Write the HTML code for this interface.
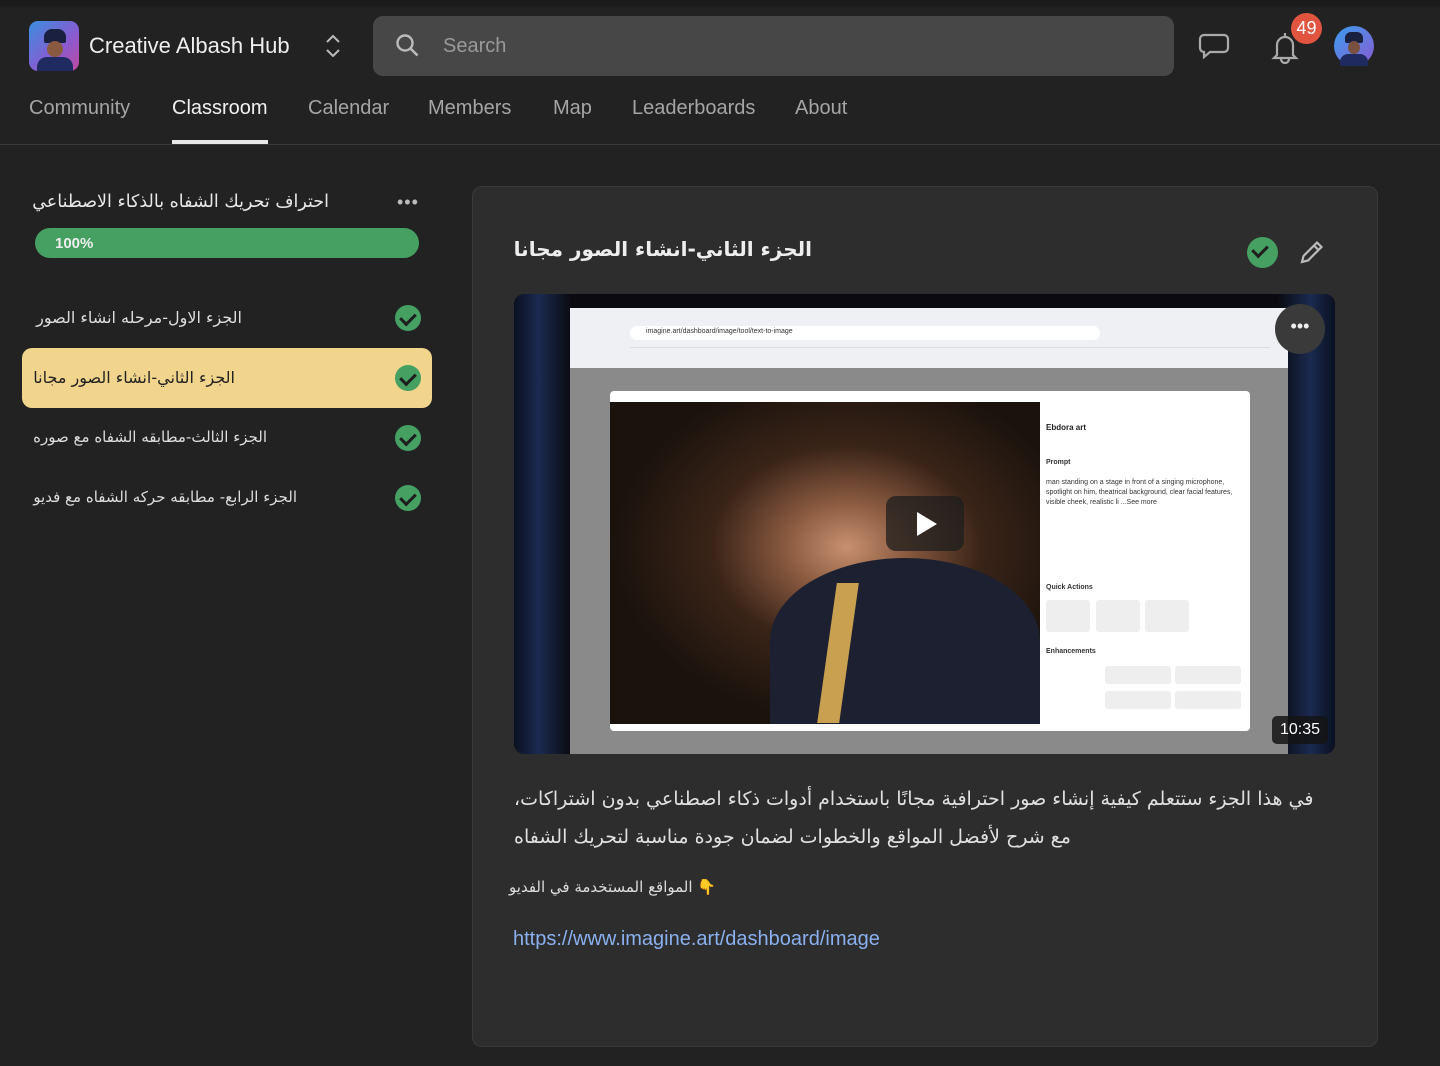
<!DOCTYPE html>
<html><head><meta charset="utf-8"><style>
*{box-sizing:border-box;margin:0;padding:0}
body{width:1440px;height:1066px;background:#222222;font-family:"Liberation Sans","Noto Sans CJK SC",sans-serif;color:#ddd;position:relative;overflow:hidden}
.abs{position:absolute}
.ar{font-family:"DejaVu Sans","Noto Sans CJK SC",sans-serif;direction:rtl;white-space:nowrap}
.check{position:absolute;width:26px;height:26px;border-radius:50%;background:#45a062}
.check:after{content:"";position:absolute;left:8px;top:5px;width:7px;height:12px;border:solid #1e1e1e;border-width:0 3px 3px 0;transform:rotate(45deg)}
.nav{position:absolute;top:97px;font-size:20px;color:#a5a5a5}
</style></head><body>
<div class="abs" style="left:0;top:0;width:1440px;height:6px;background:#1a1a1a"></div>
<div class="abs" style="left:29px;top:21px;width:50px;height:50px;border-radius:9px;background:linear-gradient(135deg,#3a8ee0,#8a5ad0 60%,#c04aa0)"><div class="abs" style="left:15px;top:8px;width:22px;height:14px;background:#1a2040;border-radius:8px 8px 2px 2px"></div><div class="abs" style="left:18px;top:20px;width:16px;height:16px;background:#8a5a40;border-radius:50%"></div><div class="abs" style="left:8px;top:36px;width:36px;height:14px;background:#1e2a60;border-radius:10px 10px 0 0"></div></div>
<div class="abs" style="left:89px;top:33px;font-size:22px;color:#eee">Creative Albash Hub</div>
<svg class="abs" style="left:322px;top:32px" width="22" height="28" viewBox="0 0 22 28"><path d="M5 10l6-6 6 6M5 18l6 6 6-6" stroke="#bbb" stroke-width="2" fill="none"/></svg>
<div class="abs" style="left:373px;top:16px;width:801px;height:60px;background:#474747;border-radius:10px"></div>
<svg class="abs" style="left:395px;top:33px" width="26" height="26" viewBox="0 0 26 26"><circle cx="10" cy="10" r="7.5" stroke="#bbb" stroke-width="2.4" fill="none"/><path d="M15.5 15.5l7 7" stroke="#bbb" stroke-width="2.6"/></svg>
<div class="abs" style="left:443px;top:35px;font-size:20px;color:#9a9a9a">Search</div>
<svg class="abs" style="left:1198px;top:32px" width="32" height="28" viewBox="0 0 32 28"><path d="M6 3h20a4 4 0 0 1 4 4v9a4 4 0 0 1-4 4H12l-6 5v-5a4 4 0 0 1-4-4V7a4 4 0 0 1 4-4z" stroke="#aaa" stroke-width="2.2" fill="none"/></svg>
<svg class="abs" style="left:1270px;top:30px" width="30" height="34" viewBox="0 0 30 34"><path d="M15 3v3M7 25V15a8 8 0 0 1 16 0v10l3 3H4z M11 29a4 4 0 0 0 8 0" stroke="#aaa" stroke-width="2.2" fill="none"/></svg>
<div class="abs" style="left:1291px;top:13px;width:31px;height:31px;border-radius:50%;background:#e05440;color:#fff;font-size:18px;text-align:center;line-height:31px">49</div>
<div class="abs" style="left:1334px;top:26px;width:40px;height:40px;border-radius:50%;background:linear-gradient(135deg,#3a9ef0,#8a5ad0)"><div class="abs" style="left:11px;top:6px;width:18px;height:11px;background:#1a2040;border-radius:6px 6px 2px 2px"></div><div class="abs" style="left:14px;top:15px;width:12px;height:13px;background:#7a5040;border-radius:50%"></div><div class="abs" style="left:6px;top:28px;width:28px;height:12px;background:#1e2a60;border-radius:8px 8px 0 0"></div></div>
<div class="nav" style="left:29px">Community</div>
<div class="nav" style="left:172px;color:#f0f0f0">Classroom</div>
<div class="abs" style="left:172px;top:140px;width:96px;height:4px;background:#e8e8e8"></div>
<div class="nav" style="left:308px">Calendar</div>
<div class="nav" style="left:428px">Members</div>
<div class="nav" style="left:553px">Map</div>
<div class="nav" style="left:632px">Leaderboards</div>
<div class="nav" style="left:795px">About</div>
<div class="abs" style="left:0;top:144px;width:1440px;height:1px;background:#3a3a3a"></div>

<div class="abs ar" style="right:1111px;top:192px;font-size:17.5px;color:#e8e8e8">احتراف تحريك الشفاه بالذكاء الاصطناعي</div>
<div class="abs" style="left:397px;top:192px;font-size:18px;color:#bbb;letter-spacing:1px">•••</div>
<div class="abs" style="left:35px;top:228px;width:384px;height:30px;border-radius:15px;background:#45a062"></div>
<div class="abs" style="left:55px;top:235px;font-size:15px;font-weight:bold;color:#eee">100%</div>
<div class="abs ar" style="right:1198px;top:308px;font-size:16px;color:#ddd">الجزء الاول-مرحله انشاء الصور</div>
<div class="check" style="left:395px;top:305px"></div>
<div class="abs" style="left:22px;top:348px;width:410px;height:60px;border-radius:10px;background:#f2d58c"></div>
<div class="abs ar" style="right:1205px;top:368px;font-size:16px;color:#222">الجزء الثاني-انشاء الصور مجانا</div>
<div class="check" style="left:395px;top:365px"></div>
<div class="abs ar" style="right:1173px;top:428px;font-size:15px;color:#ddd">الجزء الثالث-مطابقه الشفاه مع صوره</div>
<div class="check" style="left:395px;top:425px"></div>
<div class="abs ar" style="right:1143px;top:488px;font-size:15px;color:#ddd">الجزء الرابع- مطابقه حركه الشفاه مع فديو</div>
<div class="check" style="left:395px;top:485px"></div>

<div class="abs" style="left:472px;top:186px;width:906px;height:861px;background:#2d2d2d;border:1px solid #3a3a3a;border-radius:10px"></div>
<div class="abs ar" style="right:628px;top:237px;font-size:20px;font-weight:bold;color:#eee">الجزء الثاني-انشاء الصور مجانا</div>
<div class="check" style="left:1247px;top:237px;width:31px;height:31px"></div>
<svg class="abs" style="left:1298px;top:238px" width="28" height="28" viewBox="0 0 28 28"><path d="M4 24l1.5-6L19 4.5l4.5 4.5L10 22.5z M16 7.5l4.5 4.5" stroke="#bbb" stroke-width="2.2" fill="none"/></svg>

<div class="abs" style="left:514px;top:294px;width:821px;height:460px;border-radius:10px;background:linear-gradient(90deg,#0a1020,#1a2a50 3%,#0a0a10 7%,#0a0a10 93%,#1a2a50 97%,#0a1020);overflow:hidden">
 <div class="abs" style="left:56px;top:14px;width:718px;height:446px;background:#8a8a8a">
  <div class="abs" style="left:0;top:0;width:718px;height:60px;background:#eef0f3"></div>
  <div class="abs" style="left:60px;top:39px;width:640px;height:1px;background:#ddd"></div>
  <div class="abs" style="left:60px;top:18px;width:470px;height:14px;background:#fff;border-radius:7px"></div>
  <div class="abs" style="left:76px;top:20px;font-size:7px;color:#333">imagine.art/dashboard/image/tool/text-to-image</div>
  <div class="abs" style="left:40px;top:83px;width:640px;height:340px;background:#fff;border-radius:4px"></div>
  <div class="abs" style="left:40px;top:94px;width:430px;height:322px;background:radial-gradient(ellipse at 55% 45%,#c89070 0,#8a5a40 18%,#3a2418 40%,#1a120c 70%)"></div>
  <div class="abs" style="left:200px;top:250px;width:270px;height:166px;background:#1c2030;border-radius:50% 50% 0 0"></div>
  <div class="abs" style="left:257px;top:275px;width:22px;height:140px;background:#c8a050;transform:skewX(-8deg)"></div>
  <div class="abs" style="left:476px;top:115px;font-size:8px;color:#222;font-weight:bold">Ebdora art</div>
  <div class="abs" style="left:476px;top:150px;font-size:7px;color:#333;width:200px;line-height:10px"><b>Prompt</b><br><br>man standing on a stage in front of a singing microphone, spotlight on him, theatrical background, clear facial features, visible cheek, realistic li ...See more</div>
  <div class="abs" style="left:476px;top:276px;font-size:7px;color:#333;font-weight:bold">Quick Actions</div>
  <div class="abs" style="left:476px;top:292px;width:44px;height:32px;background:#eee;border-radius:3px"></div>
  <div class="abs" style="left:526px;top:292px;width:44px;height:32px;background:#eee;border-radius:3px"></div>
  <div class="abs" style="left:575px;top:292px;width:44px;height:32px;background:#eee;border-radius:3px"></div>
  <div class="abs" style="left:476px;top:340px;font-size:7px;color:#333;font-weight:bold">Enhancements</div>
  <div class="abs" style="left:535px;top:358px;width:66px;height:18px;background:#eee;border-radius:3px"></div>
  <div class="abs" style="left:605px;top:358px;width:66px;height:18px;background:#eee;border-radius:3px"></div>
  <div class="abs" style="left:535px;top:383px;width:66px;height:18px;background:#eee;border-radius:3px"></div>
  <div class="abs" style="left:605px;top:383px;width:66px;height:18px;background:#eee;border-radius:3px"></div>
 </div>
 <div class="abs" style="left:372px;top:202px;width:78px;height:55px;border-radius:10px;background:rgba(30,30,30,.75)"></div>
 <div class="abs" style="left:403px;top:218px;width:0;height:0;border-left:20px solid #fff;border-top:12px solid transparent;border-bottom:12px solid transparent"></div>
 <div class="abs" style="left:761px;top:10px;width:50px;height:50px;border-radius:50%;background:#3a3a3a;color:#eee;text-align:center;line-height:44px;font-size:18px">•••</div>
 <div class="abs" style="left:758px;top:422px;width:56px;height:28px;border-radius:5px;background:rgba(20,20,20,.85);color:#fff;font-size:16px;text-align:center;line-height:28px">10:35</div>
</div>

<div class="abs ar" style="left:514px;top:780px;width:808px;font-size:19px;line-height:38px;color:#e0e0e0;text-align:left">في هذا الجزء ستتعلم كيفية إنشاء صور احترافية مجانًا باستخدام أدوات ذكاء اصطناعي بدون اشتراكات،<br>مع شرح لأفضل المواقع والخطوات لضمان جودة مناسبة لتحريك الشفاه</div>
<div class="abs ar" style="right:724px;top:878px;font-size:15px;color:#ddd">👇 المواقع المستخدمة في الفديو</div>
<div class="abs" style="left:513px;top:928px;font-size:20px;color:#8ab0f0">https://www.imagine.art/dashboard/image</div>
</body></html>
